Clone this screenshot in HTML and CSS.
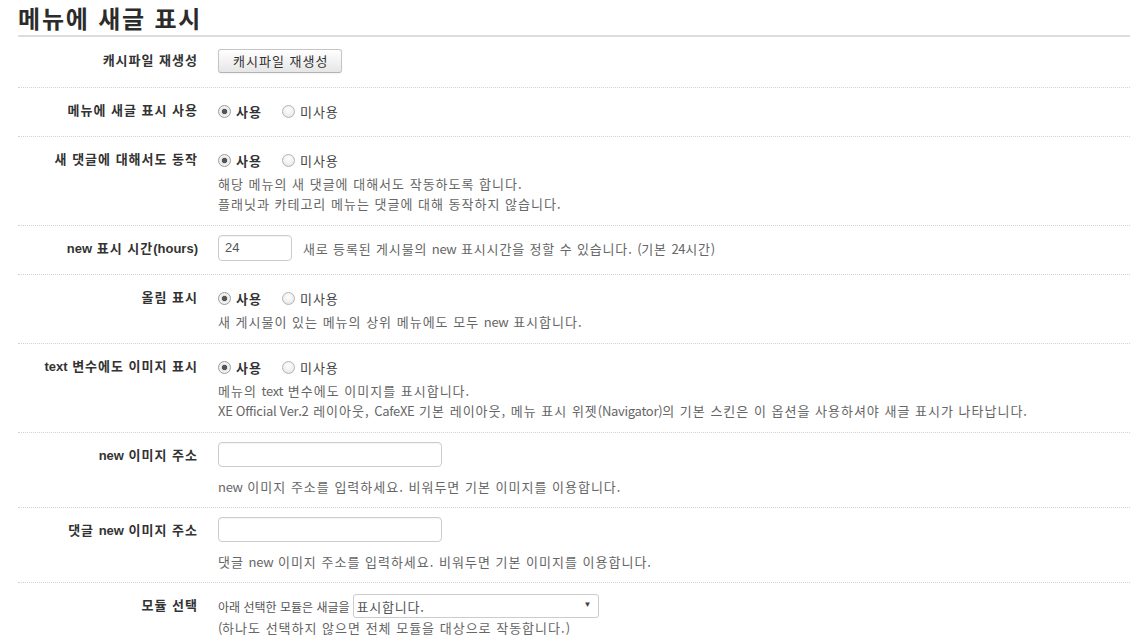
FILE: index.html
```html
<!DOCTYPE html>
<html lang="ko">
<head>
<meta charset="utf-8">
<title>메뉴에 새글 표시</title>
<link rel="stylesheet" href="styles.css">
</head>
<body>
<div class="page">
  <h1 class="title">메뉴에 새글 표시</h1>
  <form class="form">
    <div class="group first">
      <div class="label">캐시파일 재생성</div>
      <div class="controls">
        <div class="line"><button type="button" class="btn">캐시파일 재생성</button></div>
      </div>
    </div>

    <div class="group">
      <div class="label">메뉴에 새글 표시 사용</div>
      <div class="controls">
        <div class="line">
          <label class="radio on"><input type="radio" name="use" checked><span>사용</span></label>
          <label class="radio"><input type="radio" name="use"><span>미사용</span></label>
        </div>
      </div>
    </div>

    <div class="group">
      <div class="label">새 댓글에 대해서도 동작</div>
      <div class="controls">
        <div class="line">
          <label class="radio on"><input type="radio" name="cmt" checked><span>사용</span></label>
          <label class="radio"><input type="radio" name="cmt"><span>미사용</span></label>
        </div>
        <p class="help">해당 메뉴의 새 댓글에 대해서도 작동하도록 합니다.<br>플래닛과 카테고리 메뉴는 댓글에 대해 동작하지 않습니다.</p>
      </div>
    </div>

    <div class="group">
      <div class="label"><span class="en">new</span> 표시 시간<span class="en">(hours)</span></div>
      <div class="controls">
        <div class="line">
          <input type="text" class="input small" value="24">
          <span class="help inline">새로 등록된 게시물의 <span class="en">new</span> 표시시간을 정할 수 있습니다. <span class="en">(</span>기본 <span class="en">24</span>시간<span class="en">)</span></span>
        </div>
      </div>
    </div>

    <div class="group">
      <div class="label">올림 표시</div>
      <div class="controls">
        <div class="line">
          <label class="radio on"><input type="radio" name="up" checked><span>사용</span></label>
          <label class="radio"><input type="radio" name="up"><span>미사용</span></label>
        </div>
        <p class="help">새 게시물이 있는 메뉴의 상위 메뉴에도 모두 <span class="en">new</span> 표시합니다.</p>
      </div>
    </div>

    <div class="group">
      <div class="label"><span class="en">text</span> 변수에도 이미지 표시</div>
      <div class="controls">
        <div class="line">
          <label class="radio on"><input type="radio" name="txt" checked><span>사용</span></label>
          <label class="radio"><input type="radio" name="txt"><span>미사용</span></label>
        </div>
        <p class="help">메뉴의 <span class="en">text</span> 변수에도 이미지를 표시합니다.<br><span class="en">XE Official Ver.2</span> 레이아웃, <span class="en">CafeXE</span> 기본 레이아웃, 메뉴 표시 위젯<span class="en">(Navigator)</span>의 기본 스킨은 이 옵션을 사용하셔야 새글 표시가 나타납니다.</p>
      </div>
    </div>

    <div class="group tall">
      <div class="label"><span class="en">new</span> 이미지 주소</div>
      <div class="controls">
        <div class="line short"><input type="text" class="input wide"></div>
        <p class="help spaced"><span class="en">new</span> 이미지 주소를 입력하세요. 비워두면 기본 이미지를 이용합니다.</p>
      </div>
    </div>

    <div class="group tall">
      <div class="label">댓글 <span class="en">new</span> 이미지 주소</div>
      <div class="controls">
        <div class="line short"><input type="text" class="input wide"></div>
        <p class="help spaced">댓글 <span class="en">new</span> 이미지 주소를 입력하세요. 비워두면 기본 이미지를 이용합니다.</p>
      </div>
    </div>

    <div class="group last">
      <div class="label">모듈 선택</div>
      <div class="controls">
        <div class="line">
          <span class="text">아래 선택한 모듈은 새글을</span>
          <span class="select">
            <select>
              <option>표시합니다.</option>
              <option>표시하지 않습니다.</option>
            </select>
            <span class="arrow">▼</span>
          </span>
        </div>
        <p class="help tight"><span class="en">(</span>하나도 선택하지 않으면 전체 모듈을 대상으로 작동합니다.<span class="en">)</span></p>
      </div>
    </div>
  </form>
</div>
</body>
</html>
```

FILE: styles.css
```css
html, body {
  margin: 0;
  padding: 0;
  background: #fff;
}

body {
  font-family: "Liberation Sans", "Noto Sans CJK KR", sans-serif;
  font-size: 13px;
  color: #333;
}

.page {
  padding-left: 18px;
}

.en {
  letter-spacing: 0;
}

.title {
  margin: 0;
  height: 35px;
  font-family: "Noto Sans CJK KR", sans-serif;
  font-size: 24px;
  font-weight: 700;
  line-height: 36px;
  letter-spacing: 1.8px;
  color: #2b2b2b;
  border-bottom: 2px solid #ddd;
  overflow: hidden;
}

.form {
  margin: 0;
}

.group {
  display: grid;
  grid-template-columns: 180px 1fr;
  column-gap: 20px;
  padding: 9px 0 11px;
  border-top: 1px dotted #d2d2d2;
}

.group.first {
  border-top: 0;
  padding: 10px 0 12px;
}

.group.tall {
  padding-bottom: 10px;
}

.label {
  text-align: right;
  font-weight: 700;
  line-height: 28px;
  letter-spacing: 1px;
  color: #333;
  white-space: nowrap;
}

.label .en {
  letter-spacing: 0;
}

.controls {
  min-width: 0;
}

.line {
  display: flex;
  align-items: center;
  height: 28px;
  white-space: nowrap;
}

.line.short {
  height: 25px;
}

.btn {
  height: 24px;
  margin: 0;
  padding: 0 13px 0 14px;
  font-family: "Noto Sans CJK KR", sans-serif;
  font-size: 13px;
  line-height: 22px;
  letter-spacing: 1px;
  color: #333;
  background: linear-gradient(#ffffff, #e6e6e6);
  border: 1px solid #c5c5c5;
  border-bottom-color: #b3b3b3;
  border-radius: 3px;
  box-shadow: inset 0 1px 0 rgba(255, 255, 255, 0.2), 0 1px 2px rgba(0, 0, 0, 0.05);
}

.radio {
  display: inline-flex;
  align-items: center;
  margin-right: 20px;
  font-family: "Noto Sans CJK KR", sans-serif;
  letter-spacing: 1px;
  color: #444;
}

.radio.on {
  font-weight: 700;
  color: #333;
}

.radio input {
  appearance: none;
  -webkit-appearance: none;
  width: 13px;
  height: 13px;
  margin: 0 5px 0 0;
  border: 1px solid #b4b4b4;
  border-radius: 50%;
  background: radial-gradient(circle at 50% 35%, #ffffff 0%, #f0f0f0 55%, #dcdcdc 100%);
  box-sizing: border-box;
}

.radio input:checked {
  background: radial-gradient(circle, #555 0, #555 2.4px, #d9d9d9 2.9px, #f4f4f4 4px, #e2e2e2 100%);
  border-color: #9c9c9c;
}

.help {
  margin: 0;
  font-family: "Noto Sans CJK KR", sans-serif;
  font-size: 13px;
  line-height: 20px;
  letter-spacing: 1px;
  color: #666;
  white-space: nowrap;
}

.help .en {
  letter-spacing: -0.3px;
}

.help.spaced {
  margin-top: 10px;
}

.help.tight {
  margin-top: -2px;
}

.help.inline {
  margin-left: 11px;
  line-height: 28px;
  letter-spacing: 0.85px;
}

.input {
  box-sizing: border-box;
  height: 26px;
  margin: 0;
  padding: 0 6px;
  font-family: "Liberation Sans", "Noto Sans CJK KR", sans-serif;
  font-size: 13px;
  color: #555;
  background: #fff;
  border: 1px solid #ccc;
  border-radius: 4px;
  box-shadow: inset 0 1px 1px rgba(0, 0, 0, 0.04);
  outline: none;
}

.input.small {
  width: 74px;
  margin-top: -3px;
}

.input.wide {
  width: 224px;
  height: 25px;
}

.text {
  font-family: "Noto Sans CJK KR", sans-serif;
  font-size: 12px;
  color: #555;
  margin-right: 3px;
}

.select {
  position: relative;
  display: inline-block;
  width: 246px;
  height: 24px;
}

.select select {
  appearance: none;
  -webkit-appearance: none;
  box-sizing: border-box;
  width: 100%;
  height: 24px;
  margin: 0;
  padding: 0 20px 0 3px;
  font-family: "Noto Sans CJK KR", sans-serif;
  font-size: 13px;
  letter-spacing: 0.8px;
  color: #555;
  background: #fff;
  border: 1px solid #ccc;
  border-radius: 3px;
  outline: none;
}

.select .arrow {
  position: absolute;
  right: 7px;
  top: 6px;
  font-size: 8px;
  line-height: 10px;
  color: #444;
  pointer-events: none;
}
```
